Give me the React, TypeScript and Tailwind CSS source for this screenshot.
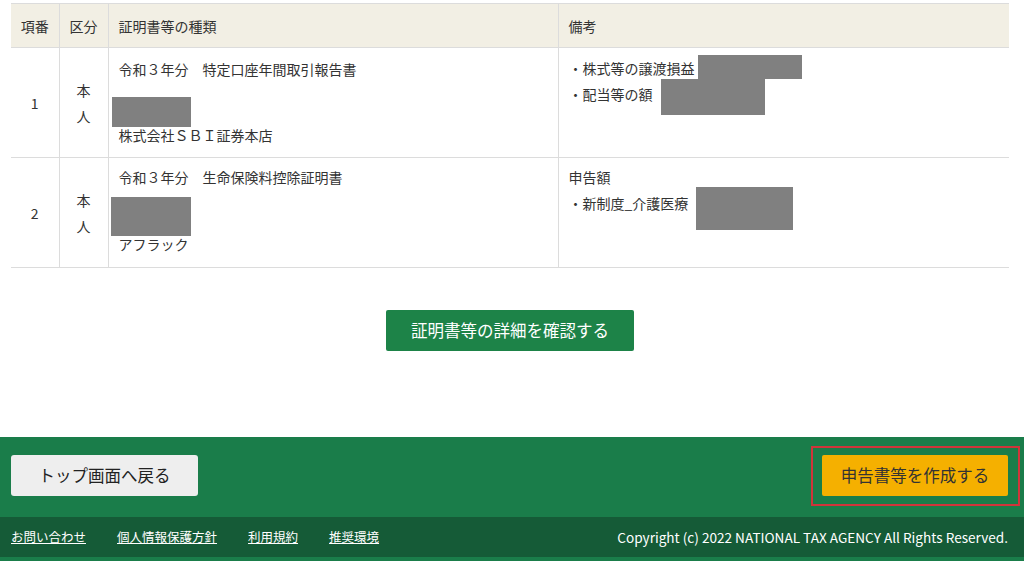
import React from 'react';

const FONT = { fontFamily: '"Noto Sans CJK JP", "Noto Sans", sans-serif' };

function Redact({ className }: { className: string }) {
  return <div className={`absolute bg-[#808080] ${className}`} />;
}

export default function App() {
  return (
    <div className="relative flex h-[561px] w-full flex-col overflow-hidden bg-white text-[#333]" style={FONT}>
      {/* 証明書一覧 */}
      <div className="px-[11px] pt-[3px]">
        <table className="w-[998px] table-fixed border-collapse text-[14px] leading-[26px]">
          <colgroup>
            <col className="w-[48px]" />
            <col className="w-[49px]" />
            <col className="w-[450px]" />
            <col className="w-[451px]" />
          </colgroup>
          <thead>
            <tr className="h-[44px] border-y border-[#dcdcdc] bg-[#f2efe4]">
              <th className="text-center font-normal">項番</th>
              <th className="border-l border-[#dcdcdc] text-center font-normal">区分</th>
              <th className="border-l border-[#dcdcdc] pl-[10px] text-left font-normal">証明書等の種類</th>
              <th className="border-l border-[#dcdcdc] pl-[10px] text-left font-normal">備考</th>
            </tr>
          </thead>
          <tbody>
            <tr className="h-[110px] border-b border-[#dcdcdc]">
              <td className="text-center">1</td>
              <td className="border-l border-[#dcdcdc] px-[14px] text-center">本人</td>
              <td className="relative border-l border-[#dcdcdc] px-[10px] pt-[8px] pb-[9px] align-top">
                <div>令和３年分　特定口座年間取引報告書</div>
                <div className="h-[40px]" />
                <div>株式会社ＳＢＩ証券本店</div>
                <Redact className="left-[3px] top-[49px] h-[30px] w-[79px]" />
              </td>
              <td className="relative border-l border-[#dcdcdc] px-[10px] pt-[7px] align-top">
                <div>・株式等の譲渡損益</div>
                <div>・配当等の額</div>
                <Redact className="left-[139px] top-[7px] h-[24px] w-[104px]" />
                <Redact className="left-[102px] top-[31px] h-[36px] w-[104px]" />
              </td>
            </tr>
            <tr className="h-[110px] border-b border-[#dcdcdc]">
              <td className="text-center">2</td>
              <td className="border-l border-[#dcdcdc] px-[14px] text-center">本人</td>
              <td className="relative border-l border-[#dcdcdc] px-[10px] pt-[6px] align-top">
                <div>令和３年分　生命保険料控除証明書</div>
                <div className="h-[41px]" />
                <div>アフラック</div>
                <Redact className="left-[2px] top-[39px] h-[39px] w-[80px]" />
              </td>
              <td className="relative border-l border-[#dcdcdc] px-[10px] pt-[6px] align-top">
                <div>申告額</div>
                <div>・新制度_介護医療</div>
                <Redact className="left-[137px] top-[29px] h-[43px] w-[97px]" />
              </td>
            </tr>
          </tbody>
        </table>
      </div>

      <div className="mt-[42px] flex justify-center pr-[4px]">
        <button className="h-[41px] w-[248px] rounded-[2px] bg-[#1d8348] text-[16.5px] text-white">
          証明書等の詳細を確認する
        </button>
      </div>

      {/* フッター */}
      <div className="relative mt-[86px] flex h-[80px] items-start justify-between bg-[#1a7d4a] px-[11px] pt-[18px]">
        <button className="h-[41px] w-[187px] rounded-[3px] bg-[#eeeeee] text-[16.5px] text-[#222]">
          トップ画面へ戻る
        </button>
        <button className="mr-[5px] h-[41px] w-[186px] rounded-[2px] bg-[#f5b000] text-[16.5px] text-[#333]">
          申告書等を作成する
        </button>
        <div className="absolute left-[811px] top-[9px] h-[60px] w-[209px] border-2 border-[#d0343a]" />
      </div>
      <div className="flex h-[40px] items-center justify-between bg-[#155b37] px-[11px] text-white">
        <div className="flex gap-[31px] text-[12.5px]">
          <a className="underline">お問い合わせ</a>
          <a className="underline">個人情報保護方針</a>
          <a className="underline">利用規約</a>
          <a className="underline">推奨環境</a>
        </div>
        <div className="pr-[5px] text-[13.6px]">Copyright (c) 2022 NATIONAL TAX AGENCY All Rights Reserved.</div>
      </div>
      <div className="h-[4px] bg-[#1a7d4a]" />
    </div>
  );
}
